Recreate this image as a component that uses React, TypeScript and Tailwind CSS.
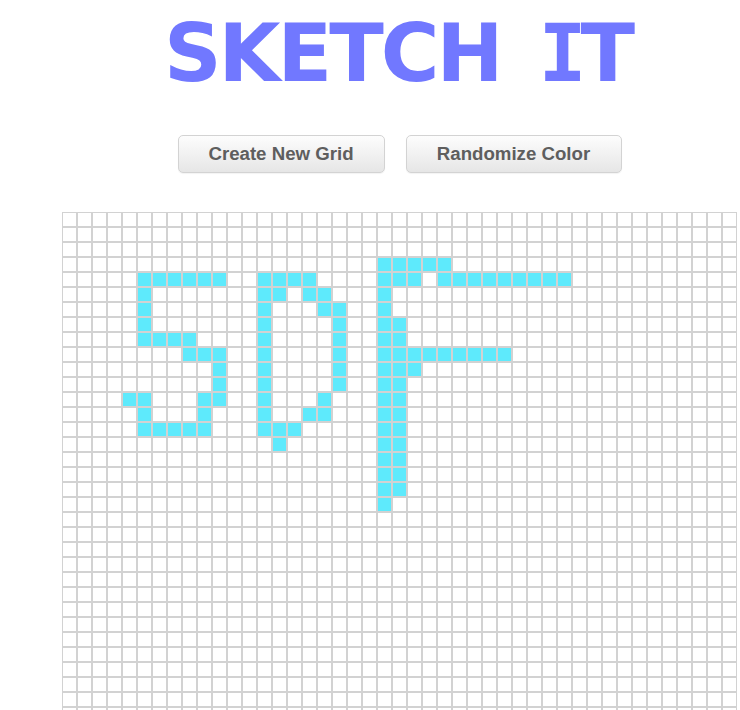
import React from "react";

const COLS = 45;
const ROWS = 45;

const filledList: [number, number][] = [];
const add = (r: number, cols: number[]) => cols.forEach((c) => filledList.push([r, c]));
const range = (a: number, b: number) => Array.from({ length: b - a + 1 }, (_, i) => a + i);

// "5"
add(4, range(5, 10));
add(5, [5]);
add(6, [5]);
add(7, [5]);
add(8, range(5, 8));
add(9, range(8, 10));
add(10, [10]);
add(11, [10]);
add(12, [4, 5, 9, 10]);
add(13, [5, 9]);
add(14, range(5, 9));
// "D"
add(4, range(13, 16));
add(5, [13, 14, 16, 17]);
add(6, [13, 17, 18]);
add(7, [13, 18]);
add(8, [13, 18]);
add(9, [13, 18]);
add(10, [13, 18]);
add(11, [13, 18]);
add(12, [13, 17]);
add(13, [13, 16, 17]);
add(14, [13, 14, 15]);
add(15, [14]);
// "F"
add(3, range(21, 25));
add(4, [21, 22, 23, ...range(25, 33)]);
add(5, [21]);
add(6, [21]);
add(7, [21, 22]);
add(8, [21, 22]);
add(9, range(21, 29));
add(10, [21, 22, 23]);
for (let r = 11; r <= 18; r++) add(r, [21, 22]);
add(19, [21]);

const filled = new Set(filledList.map(([r, c]) => r * COLS + c));

export default function App() {
  const cells = [];
  for (let i = 0; i < ROWS * COLS; i++) {
    cells.push(
      <div
        key={i}
        className={`box-border h-[15px] w-[15px] border border-[#d2d2d2] ${
          filled.has(i) ? "bg-[#5eeafc]" : "bg-white"
        }`}
      />
    );
  }
  return (
    <div className="h-[710px] w-[740px] overflow-hidden bg-white">
      <div className="flex w-[799px] flex-col items-center">
        <h1
          className="mt-[7px] flex whitespace-nowrap text-[80px] font-bold text-[#7178ff]"
          style={{ fontFamily: '"DejaVu Sans", Verdana, sans-serif', lineHeight: "normal" }}
        >
          <span className="tracking-[-3px]">SKETCH</span>
          <span
            className="ml-[38px] tracking-[-6px]"
            style={{ fontFamily: '"DejaVu Sans Mono", "DejaVu Sans", monospace' }}
          >
            I
          </span>
          <span>T</span>
        </h1>
        <div
          className="mt-[35px] flex gap-[21px]"
          style={{ fontFamily: '"Liberation Sans", Arial, sans-serif' }}
        >
          <button className="h-[38px] w-[207px] rounded-[5px] border border-[#d3d3d3] bg-gradient-to-b from-[#fdfdfd] to-[#e6e6e6] text-[18.67px] font-bold text-[#5e5e5e] shadow-[0_1px_1px_rgba(0,0,0,0.05)]">
            Create New Grid
          </button>
          <button className="h-[38px] w-[216px] rounded-[5px] border border-[#d3d3d3] bg-gradient-to-b from-[#fdfdfd] to-[#e6e6e6] text-[18.67px] font-bold text-[#5e5e5e] shadow-[0_1px_1px_rgba(0,0,0,0.05)]">
            Randomize Color
          </button>
        </div>
        <div className="mt-[39px] grid grid-cols-[repeat(45,15px)]">{cells}</div>
      </div>
    </div>
  );
}
